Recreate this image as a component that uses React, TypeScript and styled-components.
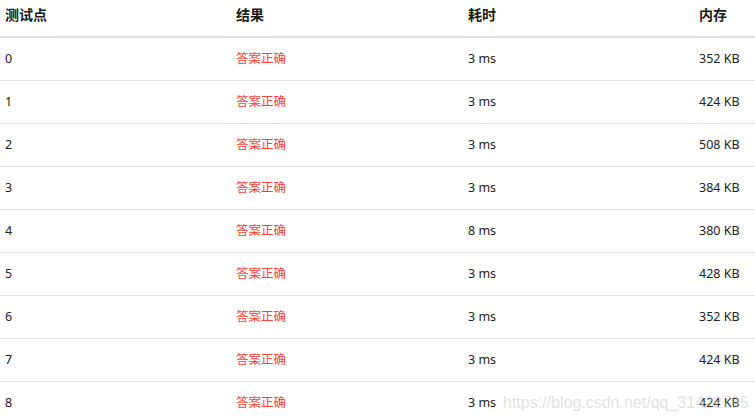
import React from "react";
import styled, { createGlobalStyle } from "styled-components";

const GlobalStyle = createGlobalStyle`
  html, body {
    margin: 0;
    padding: 0;
    background: #fff;
  }
  body {
    font-family: "Noto Sans", "Noto Sans CJK SC", sans-serif;
    color: #222;
  }
`;

type Row = { id: number; time: number; mem: number };

const rows: Row[] = [
  { id: 0, time: 3, mem: 352 },
  { id: 1, time: 3, mem: 424 },
  { id: 2, time: 3, mem: 508 },
  { id: 3, time: 3, mem: 384 },
  { id: 4, time: 8, mem: 380 },
  { id: 5, time: 3, mem: 428 },
  { id: 6, time: 3, mem: 352 },
  { id: 7, time: 3, mem: 424 },
  { id: 8, time: 3, mem: 424 },
];

export default function App() {
  return (
    <>
      <GlobalStyle />
      <Page>
        <Table>
          <HeadRow>
            <HeadCell>测试点</HeadCell>
            <HeadCell>结果</HeadCell>
            <HeadCell>耗时</HeadCell>
            <HeadCell>内存</HeadCell>
          </HeadRow>
          {rows.map((r) => (
            <BodyRow key={r.id}>
              <Cell>{r.id}</Cell>
              <Cell $ok>答案正确</Cell>
              <Cell>{r.time} ms</Cell>
              <Cell>{r.mem} KB</Cell>
            </BodyRow>
          ))}
        </Table>
        <Watermark>https://blog.csdn.net/qq_31422795</Watermark>
      </Page>
    </>
  );
}

const Page = styled.div`
  position: relative;
  width: 755px;
  height: 420px;
  overflow: hidden;
`;

const Table = styled.div`
  display: flex;
  flex-direction: column;
  width: 924px;
`;

const HeadRow = styled.div`
  display: grid;
  grid-template-columns: 231px 232px 231px 1fr;
  height: 36px;
  border-bottom: 2px solid #dcdde1;
`;

const HeadCell = styled.div`
  padding: 4px 5px 0;
  font-family: "Noto Sans CJK SC", sans-serif;
  font-size: 14px;
  font-weight: 700;
  line-height: 20px;
  color: #1a1a1a;
`;

const BodyRow = styled.div`
  display: grid;
  grid-template-columns: 231px 232px 231px 1fr;
  align-items: center;
  height: 42px;
  border-bottom: 1px solid #e3e3e6;
`;

const Cell = styled.div<{ $ok?: boolean }>`
  padding: 0 5px;
  font-size: 12.5px;
  line-height: 18px;
  color: ${(p) => (p.$ok ? "#f5443a" : "#222")};
`;

const Watermark = styled.div`
  position: absolute;
  left: 503px;
  top: 393px;
  font-family: "Liberation Sans", Arial, sans-serif;
  font-size: 16px;
  line-height: 20px;
  color: rgba(200, 200, 200, 0.55);
  white-space: nowrap;
  pointer-events: none;
`;
